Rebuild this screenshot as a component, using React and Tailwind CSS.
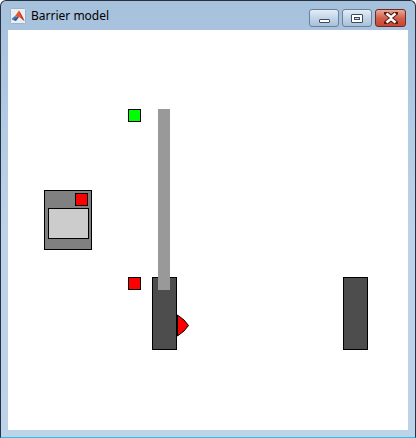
import React from "react";

// Win7-style figure window with a barrier model drawn on its canvas
function CaptionButton({ kind }) {
  const isClose = kind === "close";
  return (
    <div
      className={`flex h-[18px] items-center justify-center rounded-[3px] border ${
        isClose
          ? "w-[31px] border-[#6e2a22] bg-gradient-to-b from-[#e9a99c] via-[#d0604c] to-[#c9452f]"
          : "w-[30px] border-[#6a819b] bg-gradient-to-b from-[#e3edf7] via-[#c4d5e8] to-[#a9c0da]"
      }`}
    >
      {kind === "min" && (
        <div className="mt-[5px] h-[4px] w-[11px] rounded-[1px] border border-[#3b4b5e] bg-white" />
      )}
      {kind === "max" && (
        <div className="h-[9px] w-[12px] rounded-[1px] border border-[#3b4b5e] bg-white p-[2px]">
          <div className="h-full w-full border border-[#3b4b5e] bg-[#c9d7e6]" />
        </div>
      )}
      {isClose && (
        <svg width="14" height="12" viewBox="0 0 14 12">
          <path d="M2 1 L7 5 L12 1 M2 11 L7 7 L12 11" stroke="#5a1d14" strokeWidth="4.5" fill="none" strokeLinecap="square" />
          <path d="M2.5 1.5 L7 5.2 L11.5 1.5 M2.5 10.5 L7 6.8 L11.5 10.5" stroke="#fff" strokeWidth="2.4" fill="none" />
        </svg>
      )}
    </div>
  );
}

function MatlabIcon() {
  return (
    <svg width="16" height="16" viewBox="0 0 16 16">
      <rect x="0.5" y="0.5" width="15" height="15" rx="1" fill="#e8eef5" stroke="#9fb3c8" />
      <path d="M1.5 11 L5 8 L7 9 L3 12 Z" fill="#3d6fb4" />
      <path d="M5 8 L9 2.5 L11 6 L14.5 13 L12 11 L9 9 L7 9 Z" fill="#e4582b" />
      <path d="M9 2.5 L11 6 L14.5 13 L12 11 Z" fill="#b82a12" />
      <path d="M3 12 L7 9 L9 9 L6 13 Z" fill="#2a4f8f" />
    </svg>
  );
}

export default function App() {
  return (
    <div className="h-[438px] w-[416px] overflow-hidden rounded-t-[6px] border border-[#253140] border-b-[#1ec7de] bg-gradient-to-b from-[#a6c1dc] via-[#bcd2e9] to-[#bcd3ea] font-['Noto_Sans',sans-serif]">
      <div className="flex h-[29px] items-center pl-[9px] pr-[9px]">
        <MatlabIcon />
        <span className="ml-[5px] text-[12px] leading-none text-black">Barrier model</span>
        <div className="ml-auto flex gap-[3px] self-start pt-[8px]">
          <CaptionButton kind="min" />
          <CaptionButton kind="max" />
          <CaptionButton kind="close" />
        </div>
      </div>
      <div className="relative mx-[7px] h-[400px] w-[400px] bg-white">
        {/* green indicator */}
        <div className="absolute left-[120px] top-[79px] h-[13px] w-[13px] border border-black bg-[#00ff00]" />
        {/* control box */}
        <div className="absolute left-[36px] top-[160px] flex h-[60px] w-[48px] flex-col border border-black bg-[#808080] px-[3px] pt-[2px]">
          <div className="h-[13px] w-[13px] self-end border border-black bg-[#ff0000]" />
          <div className="mt-[2px] h-[31px] w-[41px] border border-black bg-[#cccccc]" />
        </div>
        {/* red indicator */}
        <div className="absolute left-[120px] top-[247px] h-[13px] w-[13px] border border-black bg-[#ff0000]" />
        {/* left post */}
        <div className="absolute left-[144px] top-[247px] h-[73px] w-[25px] border border-black bg-[#4d4d4d]" />
        {/* red sensor */}
        <svg className="absolute left-[169px] top-[284px]" width="13" height="23" viewBox="0 0 13 23">
          <path d="M0.5 1 L7 6 L11.5 11.5 L7 17 L0.5 22 Z" fill="#ff0000" stroke="#000" strokeWidth="1" />
        </svg>
        {/* barrier arm */}
        <div className="absolute left-[150px] top-[79px] h-[181px] w-[12px] bg-[#999999]" />
        {/* right post */}
        <div className="absolute left-[335px] top-[247px] h-[73px] w-[25px] border border-black bg-[#4d4d4d]" />
      </div>
    </div>
  );
}
